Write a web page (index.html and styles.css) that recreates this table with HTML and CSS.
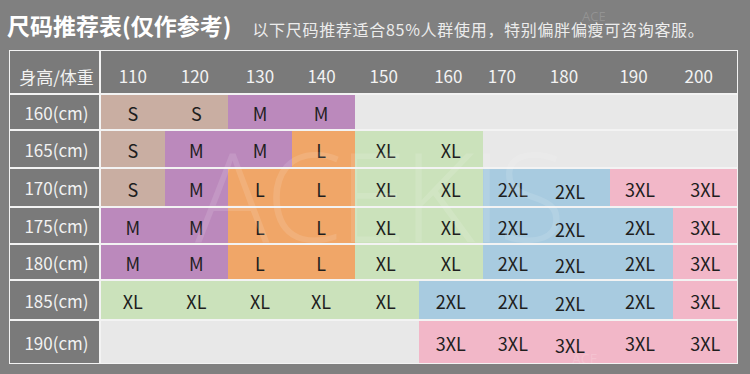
FILE: index.html
```html
<!DOCTYPE html>
<html lang="zh-CN">
<head>
<meta charset="utf-8">
<title>尺码推荐表</title>
<link rel="stylesheet" href="styles.css">
</head>
<body>
<div class="page">
  <header class="top">
    <h1 class="title">尺码推荐表(仅作参考)</h1>
    <p class="note">以下尺码推荐适合85%人群使用，特别偏胖偏瘦可咨询客服。</p>
  </header>
  <div class="chart">
    <div class="corner">身高/体重</div>
    <div class="weights">
      <span>110</span><span>120</span><span>130</span><span>140</span><span>150</span>
      <span>160</span><span>170</span><span>180</span><span>190</span><span>200</span>
    </div>

    <div class="height">160(cm)</div>
    <div class="sizes">
      <span class="s">S</span><span class="s">S</span><span class="m">M</span><span class="m">M</span><span class="e"></span>
      <span class="e"></span><span class="e"></span><span class="e"></span><span class="e"></span><span class="e"></span>
    </div>

    <div class="height">165(cm)</div>
    <div class="sizes">
      <span class="s">S</span><span class="m">M</span><span class="m">M</span><span class="l">L</span><span class="xl">XL</span>
      <span class="xl">XL</span><span class="e"></span><span class="e"></span><span class="e"></span><span class="e"></span>
    </div>

    <div class="height">170(cm)</div>
    <div class="sizes">
      <span class="s">S</span><span class="m">M</span><span class="l">L</span><span class="l">L</span><span class="xl">XL</span>
      <span class="xl">XL</span><span class="x2">2XL</span><span class="x2">2XL</span><span class="x3">3XL</span><span class="x3">3XL</span>
    </div>

    <div class="height">175(cm)</div>
    <div class="sizes">
      <span class="m">M</span><span class="m">M</span><span class="l">L</span><span class="l">L</span><span class="xl">XL</span>
      <span class="xl">XL</span><span class="x2">2XL</span><span class="x2">2XL</span><span class="x2">2XL</span><span class="x3">3XL</span>
    </div>

    <div class="height">180(cm)</div>
    <div class="sizes">
      <span class="m">M</span><span class="m">M</span><span class="l">L</span><span class="l">L</span><span class="xl">XL</span>
      <span class="xl">XL</span><span class="x2">2XL</span><span class="x2">2XL</span><span class="x2">2XL</span><span class="x3">3XL</span>
    </div>

    <div class="height">185(cm)</div>
    <div class="sizes">
      <span class="xl">XL</span><span class="xl">XL</span><span class="xl">XL</span><span class="xl">XL</span><span class="xl">XL</span>
      <span class="x2">2XL</span><span class="x2">2XL</span><span class="x2">2XL</span><span class="x2">2XL</span><span class="x3">3XL</span>
    </div>

    <div class="height">190(cm)</div>
    <div class="sizes">
      <span class="e"></span><span class="e"></span><span class="e"></span><span class="e"></span><span class="e"></span>
      <span class="x3">3XL</span><span class="x3">3XL</span><span class="x3">3XL</span><span class="x3">3XL</span><span class="x3">3XL</span>
    </div>

    <div class="watermark" aria-hidden="true">ACEKIS</div>
  </div>
  <div class="mark mark-top" aria-hidden="true">ACE</div>
  <div class="mark mark-bottom" aria-hidden="true">ACE</div>
</div>
</body>
</html>
```

FILE: styles.css
```css
* {
  box-sizing: border-box;
}

html, body {
  margin: 0;
  padding: 0;
  background: #808080;
}

.page {
  position: relative;
  width: 750px;
  height: 374px;
  overflow: hidden;
  background: #808080;
  font-family: "Noto Sans CJK SC", "Noto Sans", sans-serif;
}

.top {
  height: 50px;
  display: flex;
  align-items: flex-end;
  padding: 0 0 10px 7px;
}

.title {
  margin: 0;
  font-size: 23px;
  font-weight: 700;
  line-height: 30px;
  letter-spacing: 0;
  color: #ffffff;
}

.note {
  margin: 0 0 -2px 21px;
  font-size: 16px;
  line-height: 26px;
  letter-spacing: 0.7px;
  color: #ececec;
}

.chart {
  position: relative;
  margin-left: 9px;
  width: 729px;
  display: grid;
  grid-template-columns: 89px 636px;
  grid-template-rows: 42px 34px 36px 37px 35px 34px 38px 42px;
  gap: 2px;
  padding: 1px;
  background: #f3f3f3;
}

.corner,
.height {
  background: #7a7a7a;
  color: #f2f2f2;
  font-size: 17px;
  display: flex;
  align-items: center;
  justify-content: center;
  padding-left: 4px;
}

.corner {
  padding-top: 8px;
}

.weights {
  background: #7a7a7a;
  color: #f2f2f2;
  font-size: 17px;
  display: grid;
  grid-template-columns: repeat(10, 1fr);
  padding-top: 6px;
}

.weights span {
  display: flex;
  align-items: center;
  justify-content: center;
}

.weights span:nth-child(2) { padding-right: 3px; }
.weights span:nth-child(4) { padding-right: 4px; }
.weights span:nth-child(5) { padding-right: 7px; }
.weights span:nth-child(6) { padding-right: 5px; }
.weights span:nth-child(7) { padding-right: 25px; }
.weights span:nth-child(8) { padding-right: 28px; }
.weights span:nth-child(9) { padding-right: 16px; }
.weights span:nth-child(10) { padding-right: 13px; }

.sizes {
  display: grid;
  grid-template-columns: repeat(10, 1fr);
  font-size: 18px;
  color: #1e1e1e;
}

.sizes span {
  display: flex;
  align-items: center;
  justify-content: center;
  padding-top: 2px;
}

.sizes span:nth-child(4) { padding-right: 5px; }
.sizes span:nth-child(5) { padding-right: 3px; }
.sizes span:nth-child(7) { padding-right: 3px; }
.sizes span:nth-child(8) { padding-right: 16px; padding-top: 6px; }
.sizes span:nth-child(9) { padding-right: 3px; }

.s  { background: #c9aea2; }
.m  { background: #bb89bc; }
.l  { background: #f0a668; }
.xl { background: #cbe2bb; }
.x2 { background: #a8cbe0; }
.x3 { background: #f2b7c8; }
.e  { background: #e8e8e8; }

.watermark {
  position: absolute;
  left: 186px;
  top: 82px;
  font-family: "Open Sans", sans-serif;
  font-weight: 300;
  font-size: 124px;
  line-height: 1;
  letter-spacing: -4px;
  color: rgba(255, 255, 255, 0.12);
  pointer-events: none;
}

.mark {
  position: absolute;
  font-family: "Open Sans", sans-serif;
  font-size: 13px;
  line-height: 1;
  color: rgba(255, 255, 255, 0.16);
}

.mark-top {
  left: 582px;
  top: 10px;
}

.mark-bottom {
  left: 572px;
  top: 352px;
  font-size: 14px;
}
```
